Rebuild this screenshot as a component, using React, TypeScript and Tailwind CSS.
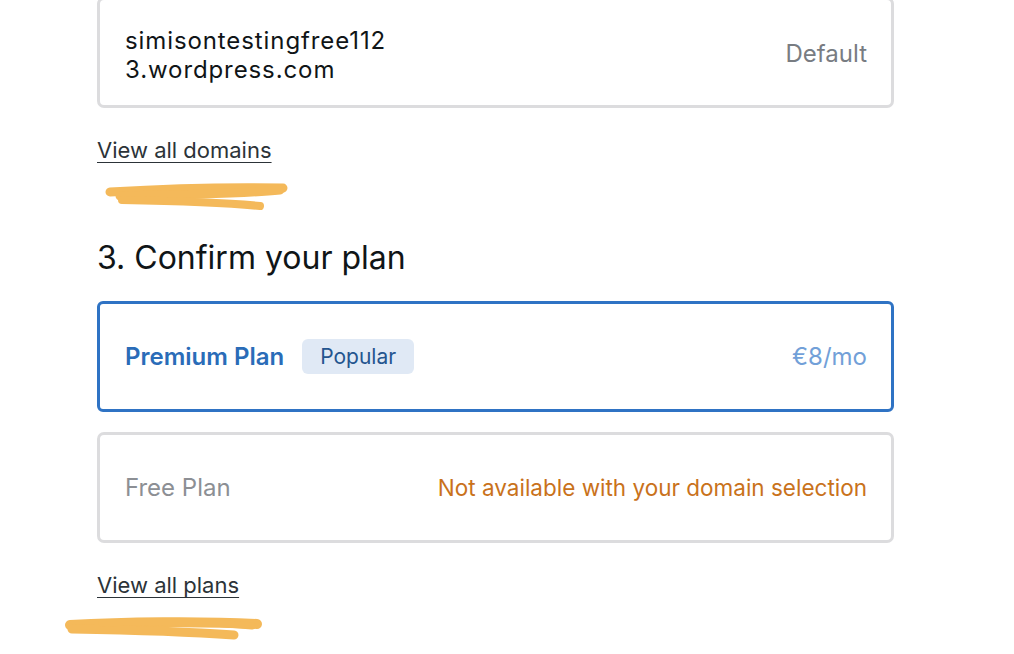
import React from 'react';

const font = { fontFamily: 'Inter, "Noto Sans", sans-serif' };

// hand-drawn highlighter marks from the screenshot
const Scribble: React.FC<{ variant: 'a' | 'b' }> = ({ variant }) =>
    variant === 'a' ? (
        <svg width="200" height="32" viewBox="0 0 200 32" className="block">
            <path d="M10 11 C60 8 130 6 183 7" stroke="#f4b95a" strokeWidth="9" strokeLinecap="round" fill="none" />
            <path d="M20 15 C80 14 150 12 180 9" stroke="#f4b95a" strokeWidth="9" strokeLinecap="round" fill="none" />
            <path d="M22 19 C80 20 130 22 160 25" stroke="#f4b95a" strokeWidth="8" strokeLinecap="round" fill="none" />
        </svg>
    ) : (
        <svg width="210" height="32" viewBox="0 0 210 32" className="block">
            <path d="M8 13 C60 10 140 9 195 12" stroke="#f4b95a" strokeWidth="10" strokeLinecap="round" fill="none" />
            <path d="M10 17 C70 18 130 20 172 23" stroke="#f4b95a" strokeWidth="9" strokeLinecap="round" fill="none" />
            <path d="M40 11 C90 9 150 10 190 14" stroke="#f4b95a" strokeWidth="7" strokeLinecap="round" fill="none" />
        </svg>
    );

export default function App() {
    return (
        <div className="w-[1014px] h-[654px] bg-white overflow-hidden" style={font}>
            <div className="ml-[97px] w-[797px] flex flex-col">
                {/* Domain card (top is cut off) */}
                <div className="-mt-[3px] h-[111px] rounded-[7px] border-[3px] border-[#dcdcde] flex items-center justify-between pl-[25px] pr-[24px]">
                    <div className="text-[24px] leading-[29px] tracking-[0.9px] text-[#101517] pt-[4px]">
                        <div>simisontestingfree112</div>
                        <div>3.wordpress.com</div>
                    </div>
                    <span className="text-[24px] text-[#787c82] pt-[3px]">Default</span>
                </div>

                <a href="#" className="mt-[27px] self-start text-[22px] leading-[30px] text-[#2c3338] underline underline-offset-[4px] decoration-1">
                    View all domains
                </a>

                <div className="ml-[3px] mt-[16px]">
                    <Scribble variant="a" />
                </div>

                <h2 className="mt-[25px] text-[32px] leading-[40px] text-[#101517] font-normal">3. Confirm your plan</h2>

                {/* Premium plan – selected */}
                <div className="mt-[23px] h-[111px] rounded-[6px] border-[3px] border-[#2f73c4] flex items-center justify-between pl-[25px] pr-[24px]">
                    <div className="flex items-center gap-[18px]">
                        <span className="text-[24px] font-semibold text-[#2a6cb8]">Premium Plan</span>
                        <span className="h-[35px] px-[18px] rounded-[6px] bg-[#e0e9f5] text-[21px] text-[#24558f] flex items-center">Popular</span>
                    </div>
                    <span className="text-[24px] text-[#72a0d8]">€8/mo</span>
                </div>

                {/* Free plan – disabled */}
                <div className="mt-[20px] h-[111px] rounded-[7px] border-[3px] border-[#dcdcde] flex items-center justify-between pl-[25px] pr-[24px]">
                    <span className="text-[24px] text-[#8c8f94]">Free Plan</span>
                    <span className="text-[22.5px] text-[#c9721b]">Not available with your domain selection</span>
                </div>

                <a href="#" className="mt-[27px] self-start text-[22px] leading-[30px] text-[#2c3338] underline underline-offset-[4px] decoration-1">
                    View all plans
                </a>

                <div className="-ml-[35px] mt-[12px]">
                    <Scribble variant="b" />
                </div>
            </div>
        </div>
    );
}
